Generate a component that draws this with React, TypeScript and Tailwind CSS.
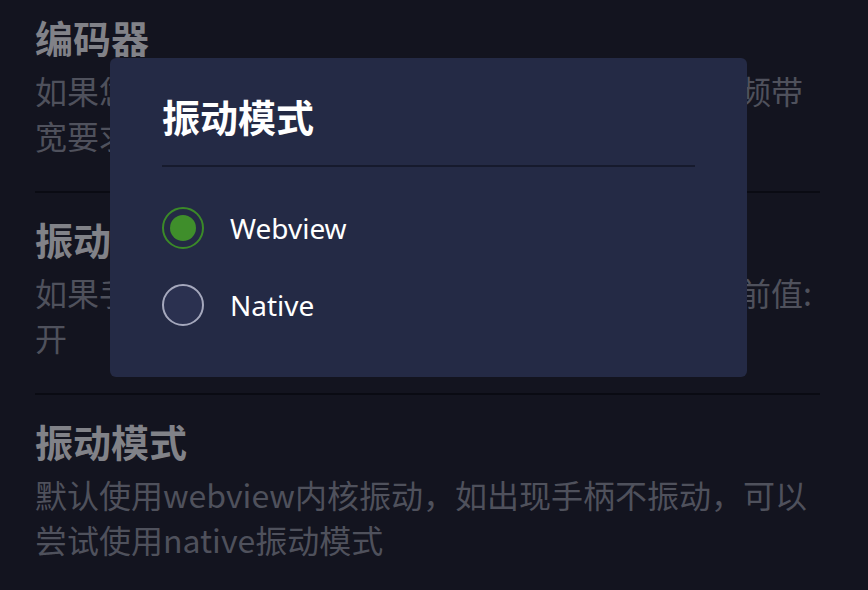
import React, { useState } from "react";

const sections = [
    {
        title: "编码器",
        desc: "如果您的设备不支持该编码，切换编码器或降低视频带宽要求。",
    },
    {
        title: "振动反馈",
        desc: "如果手柄支持振动，开启后游戏中会触发振动，当前值: 开",
    },
    {
        title: "振动模式",
        desc: "默认使用webview内核振动，如出现手柄不振动，可以尝试使用native振动模式",
    },
];

const options = ["Webview", "Native"];

export default function App() {
    const [mode, setMode] = useState("Webview");

    return (
        <div
            className="relative w-[868px] h-[590px] overflow-hidden bg-[#13141f]"
            style={{ fontFamily: '"Noto Sans CJK SC", "Noto Sans", sans-serif' }}
        >
            <div className="pl-[35px] pr-[48px]">
                {sections.map((s, i) => (
                    <div
                        key={i}
                        className={`${i === 0 ? "pt-[15px]" : "pt-[24px]"} pb-[33px] border-b-2 border-[#0a0b13]`}
                    >
                        <div className="text-[38px] leading-[44px] font-bold text-[#818288]">{s.title}</div>
                        <div className="mt-[9px] text-[32px] leading-[45px] text-[#4f515c]">{s.desc}</div>
                    </div>
                ))}
            </div>

            {/* dialog */}
            <div className="absolute left-[110px] top-[58px] w-[637px] h-[319px] rounded-[6px] bg-[#242a45] px-[52px] pt-[34px]">
                <div className="text-[38px] leading-[48px] font-bold text-white">振动模式</div>
                <div className="mt-[25px] h-[2px] bg-[#161a2d]" />
                <div className="mt-[22px] flex flex-col">
                    {options.map((o) => {
                        const on = mode === o;
                        return (
                            <button
                                key={o}
                                onClick={() => setMode(o)}
                                className="h-[77px] flex items-center gap-[26px] text-left"
                            >
                                <span
                                    className={`w-[42px] h-[42px] rounded-full border-2 flex items-center justify-center ${
                                        on ? "border-[#3b8a28] bg-transparent" : "border-[#a5a8bd] bg-[#2b3150]"
                                    }`}
                                >
                                    {on && <span className="w-[26px] h-[26px] rounded-full bg-[#3f8e2b]" />}
                                </span>
                                <span
                                    className="text-[28px] text-white"
                                    style={{ fontFamily: '"Noto Sans", sans-serif' }}
                                >
                                    {o}
                                </span>
                            </button>
                        );
                    })}
                </div>
            </div>
        </div>
    );
}
